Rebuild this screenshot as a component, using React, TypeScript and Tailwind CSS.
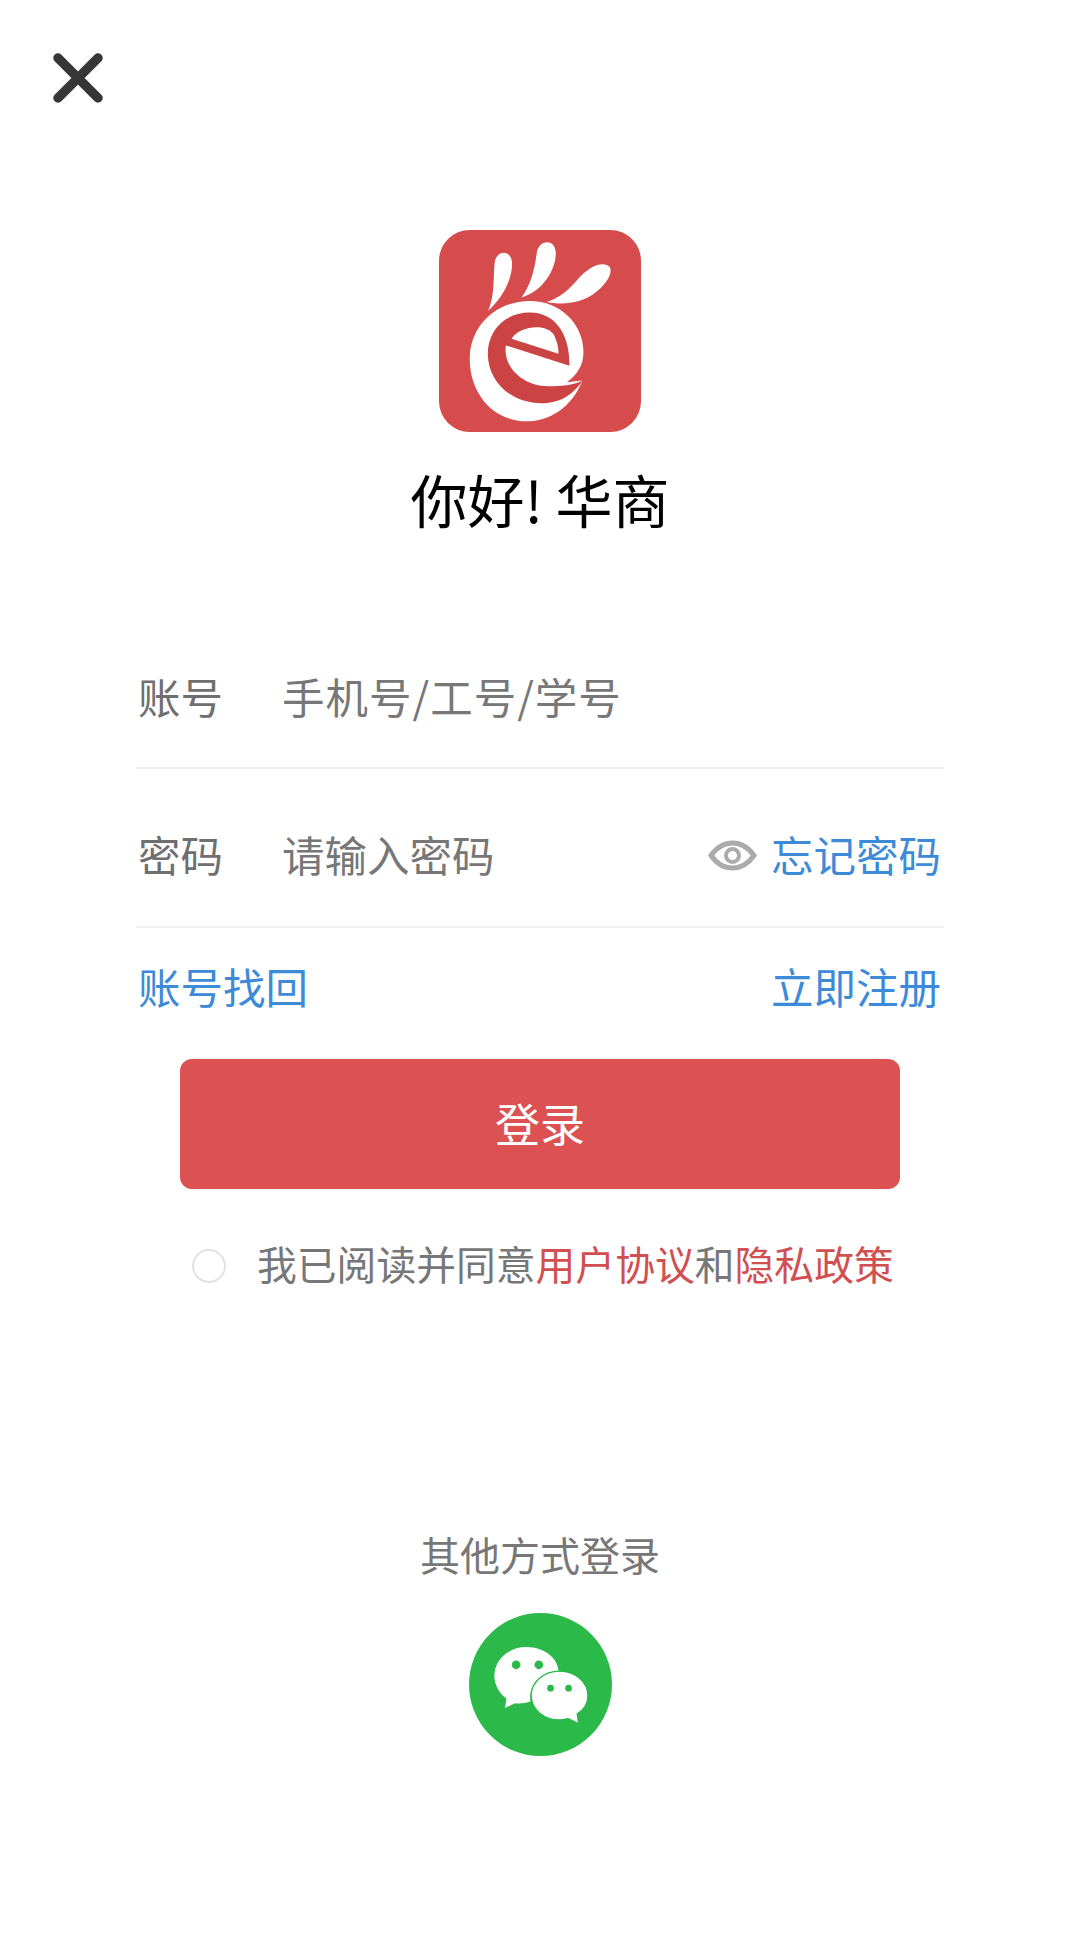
const font = '"Noto Sans CJK SC", "Liberation Sans", sans-serif';

function CloseIcon() {
  return (
    <svg width="50" height="50" viewBox="0 0 50 50" className="block">
      <path d="M5 5L45 45M45 5L5 45" stroke="#363636" strokeWidth="9.5" strokeLinecap="round" fill="none" />
    </svg>
  );
}

function Logo() {
  return (
    <svg width="202" height="202" viewBox="58 60 604 604" className="block">
      <rect x="58" y="60" width="604" height="604" rx="92" fill="#d64b4c" />
      <g fill="#ffffff">
        <path d="M205 302C225 255 220 205 224 160C228 122 266 118 275 148C282 185 262 250 205 302Z" />
        <path d="M305 262C335 220 345 170 350 130C355 88 404 85 407 125C410 170 375 240 305 262Z" />
        <path d="M380 275C420 262 445 240 475 205C505 172 545 150 568 170C580 190 555 225 525 248C480 282 425 284 380 275Z" />
        <path d="M487 510C455 590 390 632 320 632C220 632 150 550 150 445C150 345 230 272 330 272C420 272 490 340 490 425C490 465 470 495 440 515Z" />
      </g>
      <path
        d="M487 510C455 560 410 578 365 578C275 578 204 515 204 430C204 360 255 307 330 307C400 307 450 365 448 466L258 405C248 470 310 527 385 527C420 527 460 525 487 510Z"
        fill="#cc4344"
      />
      <path d="M275 385C300 346 380 338 402 375C412 395 416 415 415 430Z" fill="#ffffff" />
    </svg>
  );
}

function EyeIcon() {
  return (
    <svg width="49" height="31" viewBox="0 0 49 31" className="block" fill="none">
      <path d="M3 15.5C9 7 16 3 24.5 3C33 3 40 7 46 15.5C40 24 33 28 24.5 28C16 28 9 24 3 15.5Z" stroke="#ababab" strokeWidth="5" />
      <circle cx="24.5" cy="15.5" r="6.5" stroke="#ababab" strokeWidth="4" />
    </svg>
  );
}

function WeChatIcon() {
  return (
    <svg width="143" height="143" viewBox="84 70 428 428" className="block">
      <circle cx="298" cy="284" r="214" fill="#2bb94a" />
      <path d="M255 172C310 172 350 205 352 245C300 245 262 285 268 335C255 340 235 342 222 340L192 354L196 326C175 312 160 285 160 258C160 210 202 172 255 172Z" fill="#ffffff" />
      <path d="M355 244C402 244 440 277 440 318C440 342 428 360 408 372L412 402L380 386C372 388 362 390 355 390C308 390 270 358 270 318C270 277 308 244 355 244Z" fill="#ffffff" stroke="#2bb94a" strokeWidth="4" />
      <circle cx="225" cy="225" r="13" fill="#2bb94a" />
      <circle cx="293" cy="225" r="13" fill="#2bb94a" />
      <circle cx="328" cy="295" r="10" fill="#2bb94a" />
      <circle cx="382" cy="295" r="10" fill="#2bb94a" />
    </svg>
  );
}

export default function App() {
  return (
    <div className="flex h-[1941px] w-[1080px] flex-col bg-white" style={{ fontFamily: font }}>
      <div className="ml-[53px] mt-[53px] h-[50px] w-[50px]">
        <CloseIcon />
      </div>

      <div className="mt-[127px] flex justify-center">
        <Logo />
      </div>

      <div className="mt-[31px] flex h-[70px] items-center justify-center text-[57px] leading-[70px] text-black">
        你好! 华商
      </div>

      <div className="mt-[98px] flex flex-col px-[136px]">
        <div className="flex h-[138px] items-center border-b-2 border-[#f1f1f1] pb-[6px] text-[42.5px] leading-[50px]">
          <span className="w-[146px] pl-[2px] text-[#6f6f6f]">账号</span>
          <span className="tracking-[1px] text-[#777777]">手机号/工号/学号</span>
        </div>

        <div className="flex h-[159px] items-center border-b-2 border-[#f1f1f1] pt-[12px] text-[42.5px] leading-[50px]">
          <span className="w-[146px] pl-[2px] text-[#6f6f6f]">密码</span>
          <span className="flex-1 text-[#777777]">请输入密码</span>
          <div className="mt-[4px]">
            <EyeIcon />
          </div>
          <span className="ml-[14px] pr-[3px] text-[#3d8bd8]">忘记密码</span>
        </div>

        <div className="mt-[28px] flex h-[60px] items-center justify-between pl-[2px] pr-[3px] text-[42.5px] leading-[50px] text-[#3d8bd8]">
          <span>账号找回</span>
          <span>立即注册</span>
        </div>
      </div>

      <div className="mx-[180px] mt-[43px] flex h-[130px] items-center justify-center rounded-[12px] bg-[#dc5252] pb-[2px] text-[45px] leading-[50px] text-white">
        登录
      </div>

      <div className="mt-[51px] flex h-[50px] items-center pl-[192px]">
        <span className="mt-[2px] h-[34px] w-[34px] rounded-full border-2 border-[#e2e2e2]" />
        <span className="-mt-[5px] ml-[31px] whitespace-nowrap text-[39.8px] leading-[50px] text-[#777777]">
          我已阅读并同意<span className="text-[#d14f50]">用户协议</span>和<span className="text-[#d14f50]">隐私政策</span>
        </span>
      </div>

      <div className="mt-[239px] flex h-[50px] items-center justify-center text-[40px] leading-[50px] text-[#777777]">
        其他方式登录
      </div>

      <div className="mt-[34px] flex justify-center">
        <WeChatIcon />
      </div>
    </div>
  );
}
